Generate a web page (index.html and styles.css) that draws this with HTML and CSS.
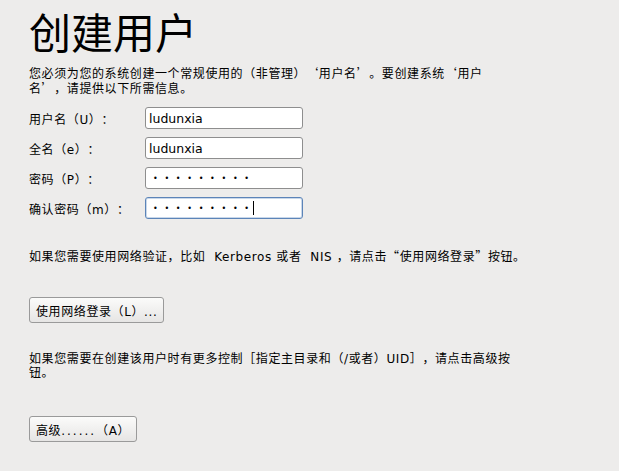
FILE: index.html
```html
<!DOCTYPE html>
<html lang="zh-CN">
<head>
    <meta charset="UTF-8">
    <title>创建用户</title>
    <link rel="stylesheet" href="styles.css">
</head>
<body>
    <div class="page">
        <h1 class="title">创建用户</h1>
        <p class="intro">您必须为您的系统创建一个常规使用的（非管理）<span class="cjk">‘</span>用户名<span class="cjk">’</span>。要创建系统<span class="cjk">‘</span>用户名<span class="cjk">’</span>，请提供以下所需信息。</p>

        <form class="user-form">
            <div class="form-row">
                <label for="username">用户名（U）：</label>
                <input type="text" id="username" value="ludunxia">
            </div>
            <div class="form-row">
                <label for="fullname">全名（e）：</label>
                <input type="text" id="fullname" value="ludunxia">
            </div>
            <div class="form-row">
                <label for="password">密码（P）：</label>
                <input type="password" id="password" value="123456789">
            </div>
            <div class="form-row">
                <label for="confirm">确认密码（m）：</label>
                <span class="caret-field">
                    <input type="password" id="confirm" class="focused" value="123456789">
                </span>
            </div>
        </form>

        <p class="hint network-hint">如果您需要使用网络验证，比如&nbsp; Kerberos 或者&nbsp; NIS ，请点击<span class="cjk">“</span>使用网络登录<span class="cjk">”</span>按钮。</p>
        <button type="button" class="btn">使用网络登录（L）...</button>

        <p class="hint advanced-hint">如果您需要在创建该用户时有更多控制［指定主目录和（/或者）UID］，请点击高级按钮。</p>
        <button type="button" class="btn">高级<span class="dots">......</span>（A）</button>
    </div>
</body>
</html>
```

FILE: styles.css
```css
* {
    box-sizing: border-box;
}

html, body {
    margin: 0;
    padding: 0;
    height: 100%;
    background-color: #edeceb;
    font-family: 'DejaVu Sans', 'Noto Sans CJK SC', sans-serif;
    font-size: 12px;
    color: #000;
    text-spacing-trim: space-all;
}

.cjk {
    font-family: 'Noto Sans CJK SC', sans-serif;
}

.page {
    padding: 10px 0 0 29px;
    width: 530px;
}

.title {
    margin: 0;
    font-size: 42px;
    font-weight: normal;
    line-height: 50px;
}

.intro {
    width: 472px;
    margin: 6px 0 11px;
    line-height: 14px;
    letter-spacing: 0.6px;
}

.user-form {
    display: flex;
    flex-direction: column;
    gap: 8px;
}

.form-row {
    display: flex;
    align-items: center;
}

label {
    width: 116px;
    letter-spacing: 0.6px;
}

input[type="text"],
input[type="password"] {
    width: 158px;
    height: 22px;
    padding: 0 3px;
    border: 1px solid #8e8e8e;
    border-radius: 3px;
    background-color: #fff;
    font-family: 'DejaVu Sans', sans-serif;
    font-size: 12.5px;
    color: #000;
    outline: none;
}

input[type="password"] {
    padding-left: 7px;
    font-size: 8px;
    letter-spacing: 6.7px;
}

input.focused {
    border-color: #5c84b8;
    box-shadow: inset 0 0 0 1px #c9d8ea;
}

/* text cursor after the last character */
.caret-field {
    position: relative;
    display: block;
}

.caret-field::after {
    content: "";
    position: absolute;
    left: 108px;
    top: 4px;
    width: 1px;
    height: 14px;
    background-color: #000;
}

.hint {
    margin: 0;
    line-height: 14px;
    letter-spacing: 0.6px;
}

.network-hint {
    margin-top: 30px;
}

.advanced-hint {
    width: 488px;
    margin-top: 29px;
}

.btn {
    display: block;
    height: 26px;
    padding: 0 6px;
    border: 1px solid #9a9a9a;
    border-radius: 3px;
    background: linear-gradient(#fbfbfa, #e6e5e4);
    font-family: 'DejaVu Sans', 'Noto Sans CJK SC', sans-serif;
    font-size: 12px;
    letter-spacing: 0.6px;
    color: #000;
}

.btn .dots {
    letter-spacing: 2px;
}

.network-hint + .btn {
    margin-top: 33px;
}

.advanced-hint + .btn {
    margin-top: 36px;
}
```
